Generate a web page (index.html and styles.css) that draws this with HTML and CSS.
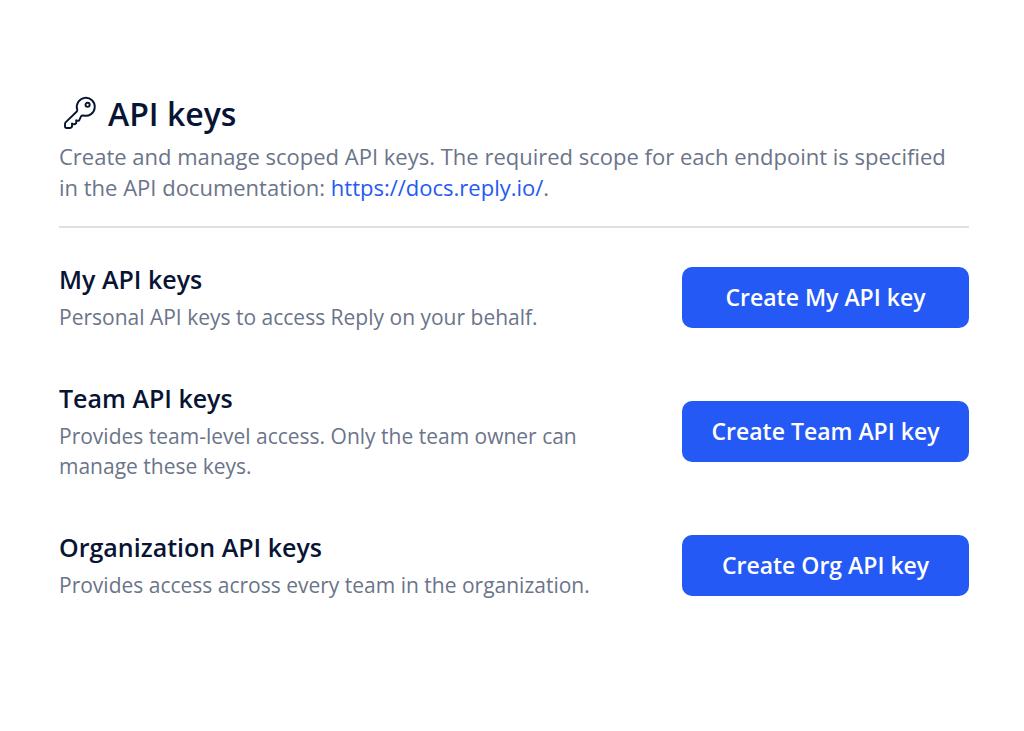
FILE: index.html
```html
<!DOCTYPE html>
<html lang="en">
<head>
<meta charset="utf-8">
<title>API keys</title>
<link rel="stylesheet" href="styles.css">
</head>
<body>
<main class="page">
  <header class="intro">
    <h1 class="title">
      <svg class="title-icon" viewBox="0 0 36 36" fill="none" stroke="currentColor" stroke-width="1.9" stroke-linejoin="round" stroke-linecap="round" aria-hidden="true">
        <path d="M14.200 13.500Q14.600 14.700 13.800 15.500L2.600 26.400Q2 27 2 28V30.300Q2 32 3.700 32H6.800Q8.300 32 9 30.800V27.400Q11 29 13.200 27.200V24.200Q15 25.400 16.300 24.200L18 20.300Q19 19.200 20.500 19.500A9 9 0 1 0 14.200 13.500Z"/>
        <circle cx="24.600" cy="8.800" r="2.100"/>
      </svg>
      API keys
    </h1>
    <p class="lead">Create and manage scoped API keys. The required scope for each endpoint is specified in the API documentation: <a class="link" href="https://docs.reply.io/">https://docs.reply.io/</a>.</p>
  </header>
  <section class="row">
    <div class="info">
      <h2 class="name">My API keys</h2>
      <p class="text">Personal API keys to access Reply on your behalf.</p>
    </div>
    <button class="button" type="button">Create My API key</button>
  </section>
  <section class="row">
    <div class="info">
      <h2 class="name">Team API keys</h2>
      <p class="text">Provides team-level access. Only the team owner can manage these keys.</p>
    </div>
    <button class="button" type="button">Create Team API key</button>
  </section>
  <section class="row">
    <div class="info">
      <h2 class="name">Organization API keys</h2>
      <p class="text">Provides access across every team in the organization.</p>
    </div>
    <button class="button" type="button">Create Org API key</button>
  </section>
</main>
</body>
</html>
```
FILE: styles.css
```css
* { box-sizing: border-box; }
body { margin: 0; background: #fff; color: #081434; font-family: "Open Sans", sans-serif; }
h1, h2, p { margin: 0; }
.page { display: flex; flex-direction: column; gap: 49px; padding: 90px 55px 90px 59px; }
.intro { padding-bottom: 23px; border-bottom: 2px solid #dfe0e6; margin-bottom: -15px; }
.title { display: flex; align-items: center; gap: 9px; padding-left: 4px; font-size: 32px; line-height: 48px; font-weight: 600; }
.title-icon { width: 36px; height: 36px; }
.lead { padding-top: 3px; color: #6b7489; font-size: 22px; line-height: 31px; }
.link { color: #2459f5; text-decoration: none; }
.row { display: flex; align-items: center; justify-content: space-between; gap: 40px; }
.info { flex: 0 1 560px; }
.name { font-size: 25px; line-height: 34px; font-weight: 600; }
.text { padding-top: 6px; color: #6b7489; font-size: 21px; line-height: 30px; }
.button { flex: none; width: 287px; padding: 14px 0 15px; border: 0; border-radius: 10px; background: #2459f5; color: #fff; font: 600 23px/32px "Open Sans", sans-serif; cursor: pointer; }
```
